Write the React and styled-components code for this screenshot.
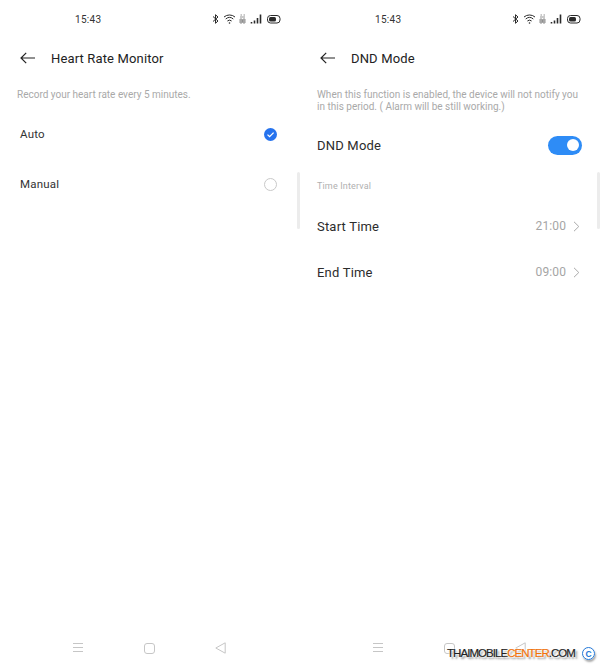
import React from "react";
import styled, { createGlobalStyle } from "styled-components";

const Global = createGlobalStyle`
  html, body {
    margin: 0;
    padding: 0;
    background: #fff;
  }
  body {
    font-family: Roboto, "Liberation Sans", sans-serif;
  }
`;

const Page = styled.div`
  position: relative;
  display: flex;
  width: 600px;
  height: 667px;
  overflow: hidden;
  background: #fff;
`;

const Phone = styled.section`
  position: relative;
  display: flex;
  flex-direction: column;
  width: 300px;
  height: 667px;
`;

const StatusBar = styled.div`
  display: flex;
  align-items: center;
  justify-content: space-between;
  height: 14px;
  margin-top: 12px;
  padding: 0 19px 0 75px;
  font-size: 10px;
  letter-spacing: 0.3px;
  color: #333;
`;

const StatusIcons = styled.div`
  display: flex;
  align-items: center;
`;

const Header = styled.header`
  display: flex;
  align-items: center;
  gap: 16px;
  height: 20px;
  margin-top: 22px;
  padding-left: 20px;
`;

const Title = styled.h1`
  margin: 0;
  font-size: 13px;
  font-weight: 400;
  letter-spacing: 0.15px;
  color: #222;
`;

const Hint = styled.p`
  margin: 21px 0 0;
  padding: 0 17px;
  font-size: 10px;
  line-height: 12px;
  color: #a9a9a9;
`;

const ChoiceList = styled.div`
  display: flex;
  flex-direction: column;
  margin-top: 8px;
`;

const ChoiceRow = styled.div`
  display: flex;
  align-items: center;
  justify-content: space-between;
  height: 50px;
  padding: 0 23.5px 0 20px;
  font-size: 11.5px;
  letter-spacing: 0.2px;
  color: #333;
`;

const EmptyRadio = styled.span`
  width: 11px;
  height: 11px;
  border: 1px solid #c9c9c9;
  border-radius: 50%;
`;

const Row = styled.div`
  display: flex;
  align-items: center;
  justify-content: space-between;
  height: ${(p) => p.$height}px;
  margin-top: ${(p) => p.$top || 0}px;
  padding: 0 ${(p) => p.$right}px 0 17px;
  font-size: 13px;
  letter-spacing: 0.2px;
  color: #2c2c2c;
`;

const Toggle = styled.span`
  display: flex;
  align-items: center;
  justify-content: flex-end;
  box-sizing: border-box;
  width: 34px;
  height: 19px;
  padding-right: 3px;
  border-radius: 10px;
  background: #2e8cf6;
`;

const Knob = styled.span`
  width: 12px;
  height: 12px;
  border-radius: 50%;
  background: #fff;
`;

const SectionLabel = styled.div`
  margin-top: 15px;
  padding-left: 17px;
  font-size: 9px;
  line-height: 12px;
  letter-spacing: 0.15px;
  color: #b0b0b0;
`;

const Value = styled.span`
  display: flex;
  align-items: center;
  gap: 7px;
  font-size: 12px;
  letter-spacing: 0.1px;
  color: #a5a5a5;
`;

const NavBar = styled.nav`
  display: flex;
  align-items: center;
  justify-content: space-between;
  height: 14px;
  margin-top: auto;
  margin-bottom: 12px;
  padding: 0 74px 0 72px;
`;

const ScrollThumb = styled.div`
  position: absolute;
  top: 172px;
  right: 0;
  width: 3px;
  height: 57px;
  border-radius: 2px;
  background: #ececec;
`;

const Watermark = styled.div`
  position: absolute;
  right: 5px;
  bottom: 7px;
  display: flex;
  align-items: center;
  gap: 7px;
`;

const MarkText = styled.span`
  font-family: "Liberation Sans", Arial, sans-serif;
  font-size: 11.5px;
  line-height: 13px;
  letter-spacing: -0.95px;
  color: #222;
  -webkit-text-stroke: 0.2px currentColor;
  text-shadow: 0 0 2px #fff, 0 0 2px #fff, 0 0 3px #fff, 2px 2px 2px rgba(0, 0, 0, 0.5);
`;

const MarkAccent = styled.span`
  color: #f0720a;
`;

const MarkCircle = styled.span`
  display: flex;
  align-items: center;
  justify-content: center;
  box-sizing: border-box;
  width: 13px;
  height: 13px;
  border: 1.5px solid #2277d8;
  border-radius: 50%;
  font-family: "Liberation Sans", Arial, sans-serif;
  font-size: 8.5px;
  font-weight: 700;
  color: #2277d8;
  box-shadow: 0 0 1px #fff, 1px 2px 2px rgba(0, 0, 0, 0.35);
`;

const BackArrow = () => (
  <svg width="15" height="12" viewBox="0 0 15 12" fill="none" stroke="#222" strokeWidth="1.2">
    <path d="M15 6H1M6.2 .8 1 6l5.2 5.2" />
  </svg>
);

const StatusGlyphs = () => (
  <StatusIcons>
    <svg width="69" height="12" viewBox="0 0 69 12" fill="none" stroke="#2a2a2a">
      {/* bluetooth */}
      <path d="M1 3.5 6 8 3.5 10.3V1.7L6 4 1 8.5" strokeWidth="1" />
      {/* wifi */}
      <path d="M12 4a8.500 8.500 0 0 1 11 0M13.700 6a5.800 5.800 0 0 1 7.600 0M15.400 8a3.200 3.200 0 0 1 4.200 0" strokeWidth="1" />
      <circle cx="17.500" cy="10" r=".8" fill="#2a2a2a" stroke="none" />
      {/* sim / 4G */}
      <path d="M28.500 2h1.500M31.500 2h1.500M28 4h5M28 6h2v4h-2zM31 6h2v4h-2zM28 8h5" strokeWidth=".7" stroke="#666" />
      {/* signal */}
      <path d="M39.500 9v1.500M42.500 7.500v3M45.500 5v5.500M48.500 1.500v9" strokeWidth="1.600" />
      {/* battery */}
      <rect x="55.500" y="2.500" width="12.500" height="7.500" rx="3" strokeWidth="1" />
      <rect x="57" y="4" width="7" height="4.500" rx="1.500" fill="#2a2a2a" stroke="none" />
    </svg>
  </StatusIcons>
);

const CheckedRadio = () => (
  <svg width="13" height="13" viewBox="0 0 13 13">
    <circle cx="6.500" cy="6.500" r="6.500" fill="#2673ee" />
    <path d="M3.500 6.600 5.600 8.600 9.600 4.600" fill="none" stroke="#fff" strokeWidth="1.300" />
  </svg>
);

const Chevron = () => (
  <svg width="7" height="11" viewBox="0 0 7 11" fill="none" stroke="#a8a8a8" strokeWidth="1">
    <path d="M1 .8 5.800 5.500 1 10.200" />
  </svg>
);

const NavIcons = () => (
  <>
    <svg width="12" height="12" viewBox="0 0 12 12" fill="none" stroke="#c6c6c6" strokeWidth="1">
      <path d="M1 1.500h10M1 5.500h10M1 9.500h10" />
    </svg>
    <svg width="11" height="11" viewBox="0 0 11 11" fill="none" stroke="#c6c6c6" strokeWidth="1">
      <rect x=".5" y=".5" width="10" height="10" rx="2.500" />
    </svg>
    <svg width="11" height="12" viewBox="0 0 11 12" fill="none" stroke="#c6c6c6" strokeWidth="1">
      <path d="M10.200 .8v10.400L.8 6z" />
    </svg>
  </>
);

export default function App() {
  return (
    <Page>
      <Global />
      <Phone>
        <StatusBar>
          <span>15:43</span>
          <StatusGlyphs />
        </StatusBar>
        <Header>
          <BackArrow />
          <Title>Heart Rate Monitor</Title>
        </Header>
        <Hint>Record your heart rate every 5 minutes.</Hint>
        <ChoiceList>
          <ChoiceRow>
            Auto
            <CheckedRadio />
          </ChoiceRow>
          <ChoiceRow>
            Manual
            <EmptyRadio />
          </ChoiceRow>
        </ChoiceList>
        <ScrollThumb />
        <NavBar>
          <NavIcons />
        </NavBar>
      </Phone>
      <Phone>
        <StatusBar>
          <span>15:43</span>
          <StatusGlyphs />
        </StatusBar>
        <Header>
          <BackArrow />
          <Title>DND Mode</Title>
        </Header>
        <Hint>
          When this function is enabled, the device will not notify you in this period. ( Alarm will be still working.)
        </Hint>
        <Row $height={40} $right={18} $top={12}>
          DND Mode
          <Toggle>
            <Knob />
          </Toggle>
        </Row>
        <SectionLabel>Time Interval</SectionLabel>
        <Row $height={46} $right={20} $top={11}>
          Start Time
          <Value>
            21:00
            <Chevron />
          </Value>
        </Row>
        <Row $height={46} $right={20}>
          End Time
          <Value>
            09:00
            <Chevron />
          </Value>
        </Row>
        <ScrollThumb />
        <NavBar>
          <NavIcons />
        </NavBar>
      </Phone>
      <Watermark>
        <MarkText>
          THAIMOBILE<MarkAccent>CENTER</MarkAccent>.COM
        </MarkText>
        <MarkCircle>C</MarkCircle>
      </Watermark>
    </Page>
  );
}
